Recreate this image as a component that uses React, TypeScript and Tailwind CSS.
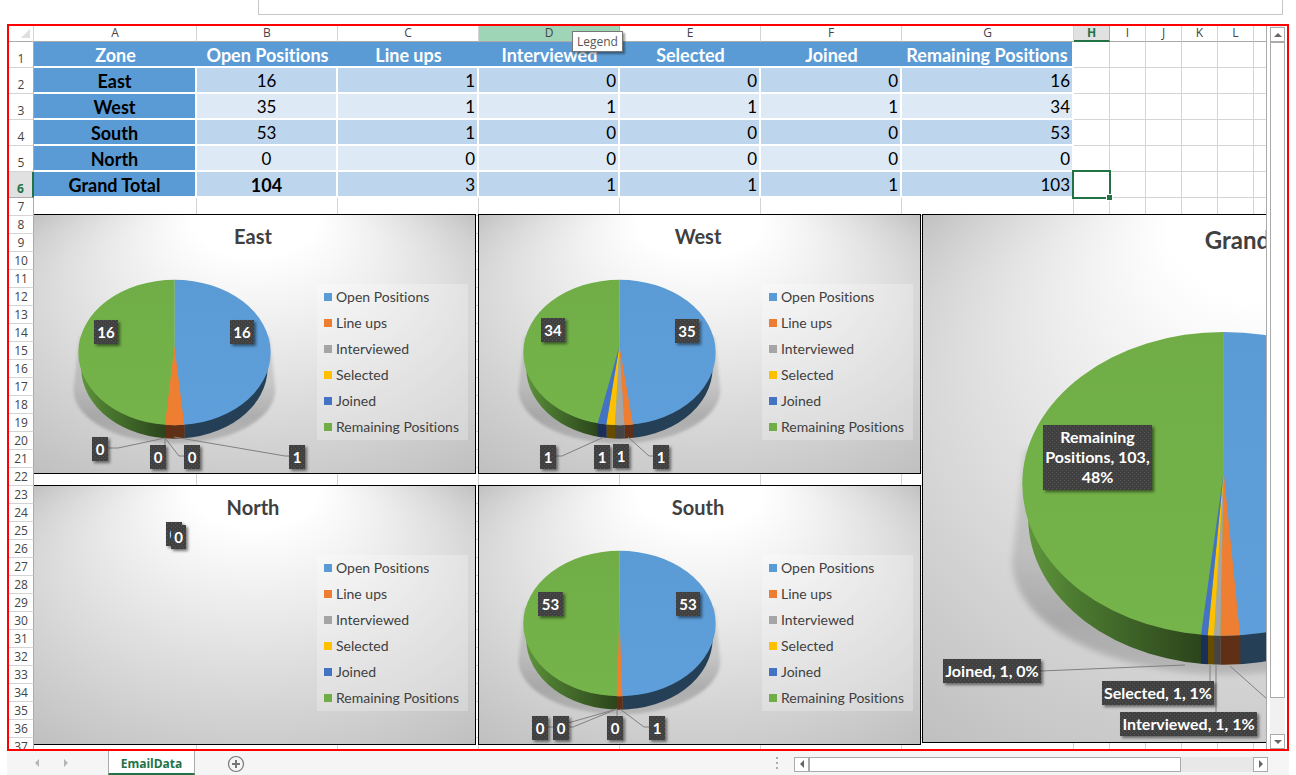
import React, { useId } from "react";

type Label = { x: number; y: number; w: number; h: number; lines: string[] };
type Wedge = { from: number; to: number; color: string; side: string };
type PieShape = { cx: number; cy: number; rx: number; ry: number; apex: number; lowCy: number; lowRx: number; lowRy: number };
type ChartData = {
  title: string;
  wedges: Wedge[];
  leaders: string[];
  labels: Label[];
  labelSize: string;
  pie?: PieShape;
};

const BLUE = "#5b9bd5";
const ORANGE = "#ee7e32";
const GRAY = "#a5a5a5";
const YELLOW = "#ffc000";
const NAVY = "#4472c4";
const GREEN = "#70ad47";

const legend = [
  { name: "Open Positions", swatch: "bg-[#5b9bd5]" },
  { name: "Line ups", swatch: "bg-[#ed7d31]" },
  { name: "Interviewed", swatch: "bg-[#a5a5a5]" },
  { name: "Selected", swatch: "bg-[#ffc000]" },
  { name: "Joined", swatch: "bg-[#4472c4]" },
  { name: "Remaining Positions", swatch: "bg-[#70ad47]" },
];

const columns = [
  { id: "A", width: "w-[163px]" },
  { id: "B", width: "w-[141px]" },
  { id: "C", width: "w-[141px]" },
  { id: "D", width: "w-[141px]" },
  { id: "E", width: "w-[141px]" },
  { id: "F", width: "w-[141px]" },
  { id: "G", width: "w-[172px]" },
  { id: "H", width: "w-[36px]" },
  { id: "I", width: "w-[36px]" },
  { id: "J", width: "w-[36px]" },
  { id: "K", width: "w-[36px]" },
  { id: "L", width: "w-[36px]" },
  { id: "", width: "w-[36px]" },
];
const spareColumns = ["H", "I", "J", "K", "L", ""];

const headings = ["Zone", "Open Positions", "Line ups", "Interviewed", "Selected", "Joined", "Remaining Positions"];
const rows = [
  ["East", "16", "1", "0", "0", "0", "16"],
  ["West", "35", "1", "1", "1", "1", "34"],
  ["South", "53", "1", "0", "0", "0", "53"],
  ["North", "0", "0", "0", "0", "0", "0"],
  ["Grand Total", "104", "3", "1", "1", "1", "103"],
];

const smallPie: PieShape = { cx: 141.4, cy: 138.5, rx: 96.3, ry: 72.7, apex: 132, lowCy: 154, lowRx: 93.2, lowRy: 70.7 };
const largePie: PieShape = { cx: 301.7, cy: 269.8, rx: 201.7, ry: 151.9, apex: 258, lowCy: 303.7, lowRx: 195.5, lowRy: 147 };

const box = (x: number, y: number, w: number, text: string): Label => ({ x, y, w, h: 24, lines: [text] });

const east: ChartData = {
  title: "East",
  pie: smallPie,
  labelSize: "text-[15px]",
  wedges: [{ from: 132, to: 151.3, color: ORANGE, side: "#5f3015" }],
  leaders: ["132,224 85,234 75,234", "132,224 132,231", "132,224 146,242 151,242", "141,223 252,242 256,242"],
  labels: [box(61, 106, 24, "16"), box(197, 106, 24, "16"), box(59, 223, 16, "0"), box(117, 231, 16, "0"), box(151, 231, 16, "0"), box(256, 231, 16, "1")],
};

const west: ChartData = {
  title: "West",
  pie: smallPie,
  labelSize: "text-[15px]",
  wedges: [
    { from: 146.3, to: 155, color: ORANGE, side: "#5f3015" },
    { from: 137, to: 146.3, color: GRAY, side: "#444444" },
    { from: 128.3, to: 137, color: YELLOW, side: "#664c00" },
    { from: 119.7, to: 128.3, color: NAVY, side: "#1b2e58" },
  ],
  leaders: ["126,223 84,242 78,242", "150,223 171,242 175,242"],
  labels: [box(63, 104, 24, "34"), box(197, 105, 24, "35"), box(62, 231, 16, "1"), box(116, 231, 16, "1"), box(135, 230, 16, "1"), box(175, 231, 16, "1")],
};

const south: ChartData = {
  title: "South",
  pie: smallPie,
  labelSize: "text-[15px]",
  wedges: [{ from: 138.7, to: 144.4, color: ORANGE, side: "#5f3015" }],
  leaders: ["139,224 90,238", "139,224 95,242 70,242", "139,224 139,231", "142,224 166,242 171,242"],
  labels: [box(60, 107, 25, "53"), box(198, 107, 24, "53"), box(54, 231, 16, "0"), box(75, 231, 16, "0"), box(129, 231, 16, "0"), box(171, 231, 16, "1")],
};

const north: ChartData = {
  title: "North",
  labelSize: "text-[15px]",
  wedges: [],
  leaders: [],
  labels: [box(133, 37, 16, "0"), box(138, 40, 15, "0")],
};

const grand: ChartData = {
  title: "Grand Total",
  pie: largePie,
  labelSize: "text-[16px]",
  wedges: [
    { from: 298.3, to: 318, color: ORANGE, side: "#5f3015" },
    { from: 292, to: 298.3, color: GRAY, side: "#444444" },
    { from: 285.7, to: 292, color: YELLOW, side: "#664c00" },
    { from: 279, to: 285.7, color: NAVY, side: "#1b2e58" },
  ],
  leaders: ["119,457 263,451", "288,451 288,467", "294,451 294,498", "308,452 345,485"],
  labels: [
    { x: 121, y: 211, w: 109, h: 65, lines: ["Remaining", "Positions, 103,", "48%"] },
    box(21, 445, 98, "Joined, 1, 0%"),
    box(180, 467, 112, "Selected, 1, 1%"),
    box(198, 498, 137, "Interviewed, 1, 1%"),
  ],
};

function edgeY(p: PieShape, x: number) {
  const d = (x - p.cx) / p.rx;
  return p.cy + p.ry * Math.sqrt(1 - d * d);
}

function Pie({ shape: p, wedges, id }: { shape: PieShape; wedges: Wedge[]; id: string }) {
  const s = p.rx / 96.3;
  const right = Math.max(...wedges.map((w) => w.to));
  const left = Math.min(...wedges.map((w) => w.from));
  const top = p.cy - p.ry;
  const bottom = p.lowCy + p.lowRy + 2;
  const sideTop = p.cy + 6 * s;
  const shY = p.cy + 37 * s;
  const shX = 101 * s;
  return (
    <g>
      <defs>
        <linearGradient id={`${id}-side`} x1="0" x2="1" y1="0" y2="0">
          <stop offset="0" stopColor="#62993e" />
          <stop offset="0.3" stopColor="#4c7a30" />
          <stop offset="1" stopColor="#2b441b" />
        </linearGradient>
        <linearGradient id={`${id}-shade`} x1="0" x2="0" y1="0" y2="1">
          <stop offset="0" stopColor="#000" stopOpacity="0.12" />
          <stop offset="0.45" stopColor="#000" stopOpacity="0.12" />
          <stop offset="0.75" stopColor="#000" stopOpacity="0.2" />
          <stop offset="1" stopColor="#000" stopOpacity="0.14" />
        </linearGradient>
        <linearGradient id={`${id}-green`} x1="0" x2="0" y1="0" y2="1">
          <stop offset="0" stopColor={GREEN} />
          <stop offset="1" stopColor="#75b44a" />
        </linearGradient>
        <linearGradient id={`${id}-blue`} x1="0" x2="0" y1="0" y2="1">
          <stop offset="0" stopColor={BLUE} />
          <stop offset="1" stopColor="#5e9fdb" />
        </linearGradient>
        <filter id={`${id}-blur`} x="-10%" y="-10%" width="120%" height="120%">
          <feGaussianBlur stdDeviation={1.4 * s} />
        </filter>
        <clipPath id={`${id}-low`}>
          <path d={`M${p.cx - p.lowRx},${sideTop} V${p.lowCy} A${p.lowRx},${p.lowRy} 0 0 0 ${p.cx + p.lowRx},${p.lowCy} V${sideTop} Z`} />
        </clipPath>
      </defs>
      <path
        d={`M${p.cx - 95 * s},${p.cy - 16 * s} L${p.cx - shX},${shY} A${shX},${54 * s} 0 0 0 ${p.cx + shX},${shY} L${p.cx + 95 * s},${p.cy - 16 * s} Z`}
        fill={`url(#${id}-shade)`}
        filter={`url(#${id}-blur)`}
      />
      <g clipPath={`url(#${id}-low)`}>
        <rect x={p.cx - p.rx} y={sideTop} width={left - p.cx + p.rx + 1} height={bottom - sideTop} fill={`url(#${id}-side)`} />
        <rect x={right} y={sideTop} width={p.cx + p.rx - right} height={bottom - sideTop} fill="#243f56" />
        {wedges.map((w) => (
          <rect key={w.from} x={w.from} y={p.cy} width={w.to - w.from + 0.3} height={bottom - p.cy} fill={w.side} />
        ))}
      </g>
      <path d={`M${p.cx},${top} A${p.rx},${p.ry} 0 0 1 ${p.cx},${p.cy + p.ry} Z`} fill={`url(#${id}-blue)`} />
      <path d={`M${p.cx + 0.2},${top} A${p.rx},${p.ry} 0 0 0 ${p.cx + 0.2},${p.cy + p.ry} Z`} fill={`url(#${id}-green)`} />
      {wedges.map((w) => (
        <path
          key={w.from}
          d={`M${p.cx},${p.apex} L${w.from},${edgeY(p, w.from)} A${p.rx},${p.ry} 0 0 0 ${w.to},${edgeY(p, w.to)} Z`}
          fill={w.color}
        />
      ))}
    </g>
  );
}

function ChartDrawing({ data, width, height }: { data: ChartData; width: number; height: number }) {
  const id = useId().replace(/[^a-zA-Z0-9]/g, "");
  return (
    <svg className="absolute inset-0 size-full" viewBox={`0 0 ${width} ${height}`} preserveAspectRatio="none" role="img" aria-label={`${data.title} pie chart`}>
      <defs>
        <radialGradient id={`${id}-bg`} cx="0.5" cy="0.5" r="0.707" fx="0.5" fy="-0.1">
          <stop offset="0.2" stopColor="#ffffff" />
          <stop offset="1" stopColor="#bfbfbf" />
        </radialGradient>
        <pattern id={`${id}-dots`} width="4" height="4" patternUnits="userSpaceOnUse">
          <rect width="4" height="4" fill="#3f3f3f" />
          <rect width="1" height="1" fill="#565656" />
          <rect x="2" y="2" width="1" height="1" fill="#565656" />
        </pattern>
        <filter id={`${id}-drop`} x="-30%" y="-30%" width="180%" height="180%">
          <feDropShadow dx="2" dy="2" stdDeviation="1.5" floodColor="#000" floodOpacity="0.5" />
        </filter>
      </defs>
      <rect width={width} height={height} fill={`url(#${id}-bg)`} />
      {data.pie && <Pie shape={data.pie} wedges={data.wedges} id={id} />}
      {data.leaders.map((points, i) => (
        <polyline key={i} points={points} fill="none" stroke="#808080" strokeWidth="1" />
      ))}
      {data.labels.map((l, i) => (
        <g key={i}>
          <rect x={l.x} y={l.y} width={l.w} height={l.h} fill={`url(#${id}-dots)`} filter={`url(#${id}-drop)`} />
          {l.lines.map((line, n) => (
            <text key={n} x={l.x + l.w / 2} y={l.y + 18 + n * 20} textAnchor="middle" fill="#fff" className={`font-bold ${data.labelSize}`}>
              {line}
            </text>
          ))}
        </g>
      ))}
    </svg>
  );
}

function SmallChart({ data, place }: { data: ChartData; place: string }) {
  return (
    <section className={`absolute h-[260px] w-[443px] ${place}`}>
      <ChartDrawing data={data} width={443} height={260} />
      <div className="absolute inset-0 border border-black pt-[7px]">
        <h2 className="pr-[3px] text-center text-[20px] leading-7 font-bold text-[#404040]">{data.title}</h2>
        <ul className="absolute top-[69px] right-[7px] w-[151px] bg-white/25 pl-[7px] text-[14px] leading-[26px] text-[#404040]">
          {legend.map((item) => (
            <li key={item.name} className="flex items-center gap-1 whitespace-nowrap">
              <span className={`size-2 shrink-0 ${item.swatch}`} />
              {item.name}
            </li>
          ))}
        </ul>
      </div>
    </section>
  );
}

function GrandChart() {
  return (
    <section className="absolute top-[172px] left-[888px] h-[529px] w-[688px]">
      <ChartDrawing data={grand} width={688} height={529} />
      <div className="absolute inset-0 border border-black pt-[7px]">
        <h2 className="text-center text-[24px] leading-9 font-bold text-[#404040]">{grand.title}</h2>
      </div>
    </section>
  );
}

function RowNumber({ n }: { n: number }) {
  const active = n === 6;
  return (
    <th
      scope="row"
      className={`border-b p-0 align-bottom font-['Open_Sans',sans-serif] text-[12px] leading-[17px] ${
        active
          ? "border-r-2 border-b-[#ababab] border-r-[#217346] bg-[#e1e1e1] font-bold text-[#217346]"
          : "border-r border-b-[#d4d4d4] border-r-[#ababab] font-normal text-[#444]"
      }`}
    >
      {n}
    </th>
  );
}

function Sheet() {
  return (
    <table className="w-[1281px] table-fixed border-separate border-spacing-0 leading-[22px] text-black">
      <colgroup>
        <col className="w-[25px]" />
        {columns.map((c) => (
          <col key={c.id} className={c.width} />
        ))}
      </colgroup>
      <thead>
        <tr className="h-4 font-['Open_Sans',sans-serif] text-[12px] leading-[14px] text-[#444]">
          <td className="border-r border-b border-r-[#d4d4d4] border-b-[#ababab] p-0">
            <svg className="ml-auto mr-[3px] size-[9px]" viewBox="0 0 9 9" aria-hidden="true">
              <path d="M9 0V9H0Z" fill="#dedede" />
            </svg>
          </td>
          {columns.map((c) => (
            <th
              key={c.id}
              scope="col"
              className={`p-0 align-top ${
                c.id === "H"
                  ? "border-r border-b-2 border-r-[#ababab] border-b-[#217346] bg-[#e1e1e1] font-bold text-[#217346]"
                  : c.id === "D"
                    ? "border-r border-b border-[#ababab] bg-[#9fd5b7] font-normal"
                    : "border-r border-b border-r-[#d4d4d4] border-b-[#ababab] font-normal"
              }`}
            >
              {c.id}
            </th>
          ))}
        </tr>
      </thead>
      <tbody>
        <tr className="h-[26px]">
          <RowNumber n={1} />
          {headings.map((h, i) => (
            <th
              key={h}
              scope="col"
              className={`border-b-2 border-white bg-[#5b9bd5] bg-clip-padding p-0 pt-[2px] text-[18px] font-bold whitespace-nowrap text-white ${i === 6 ? "border-r-2" : ""}`}
            >
              {h}
            </th>
          ))}
          {spareColumns.map((c) => (
            <td key={c} className="border-r border-b border-[#d4d4d4] p-0" />
          ))}
        </tr>
        {rows.map((row, r) => (
          <tr key={row[0]} className="h-[26px]">
            <RowNumber n={r + 2} />
            {row.map((value, i) => (
              <td
                key={i}
                className={`border-r-2 border-b-2 border-white p-0 pt-[2px] ${i === 0 ? "bg-[#5b9bd5]" : r % 2 ? "bg-[#ddeaf6]" : "bg-[#bdd5ed]"} ${
                  i < 2 ? "text-center" : "pr-[2px] text-right"
                } ${i === 0 || (i === 1 && r === 4) ? "text-[18px] font-bold" : "text-[17px]"}`}
              >
                {value}
              </td>
            ))}
            {spareColumns.map((c) => (
              <td key={c} className="relative border-r border-b border-[#d4d4d4] p-0">
                {c === "H" && r === 4 && (
                  <span className="absolute -inset-[2px] z-10 border-2 border-[#217346]">
                    <span className="absolute -right-[4px] -bottom-[4px] size-[7px] border border-white bg-[#217346]" />
                  </span>
                )}
              </td>
            ))}
          </tr>
        ))}
        {Array.from({ length: 31 }, (_, i) => (
          <tr key={i} className="h-[18px]">
            <RowNumber n={i + 7} />
            {columns.map((c) => (
              <td key={c.id} className="border-r border-b border-[#d4d4d4] p-0" />
            ))}
          </tr>
        ))}
      </tbody>
    </table>
  );
}

function Arrow({ path }: { path: string }) {
  return (
    <svg className="size-2" viewBox="0 0 8 8" aria-hidden="true">
      <path d={path} fill="currentColor" />
    </svg>
  );
}
const UP = "M0 6L4 2L8 6Z";
const DOWN = "M0 2L4 6L8 2Z";
const LEFT = "M6 0L2 4L6 8Z";
const RIGHT = "M2 0L6 4L2 8Z";

const scrollButton = "flex size-[15px] shrink-0 items-center justify-center border border-[#ababab] bg-white text-[#666]";

export default function App() {
  return (
    <div className="flex h-screen flex-col overflow-hidden bg-white px-[7px] font-[Lato,'Noto_Sans',sans-serif] [font-variant-ligatures:none]">
      <div className="mr-[6px] mb-[9px] ml-[251px] h-[15px] shrink-0 border-x border-b border-[#c6c6c6]" />
      <main className="flex min-h-0 flex-1 border-2 border-[#ff0000]">
        <div className="relative min-w-0 flex-1 overflow-hidden border-r border-[#ababab]">
          <Sheet />
          <div className="absolute top-4 right-0 bottom-0 left-[25px] overflow-hidden">
            <SmallChart data={east} place="top-[172px] left-[-1px]" />
            <SmallChart data={west} place="top-[172px] left-[444px]" />
            <SmallChart data={north} place="top-[443px] left-[-1px]" />
            <SmallChart data={south} place="top-[443px] left-[444px]" />
            <GrandChart />
          </div>
          <div
            role="tooltip"
            className="absolute top-[5px] left-[563px] z-20 border border-[#767676] bg-white px-[4px] font-['Open_Sans',sans-serif] text-[12px] leading-[19px] text-[#575757] shadow-[2px_2px_2px_rgba(0,0,0,0.4)]"
          >
            Legend
          </div>
        </div>
        <div className="mr-[2px] ml-[3px] flex w-[15px] shrink-0 flex-col bg-[#f1f1f1] pt-px">
          <button type="button" aria-label="Scroll up" className={scrollButton}>
            <Arrow path={UP} />
          </button>
          <div className="min-h-0 flex-1 border border-[#ababab] bg-white" />
          <div className="h-9 shrink-0" />
          <button type="button" aria-label="Scroll down" className={scrollButton}>
            <Arrow path={DOWN} />
          </button>
        </div>
      </main>
      <footer className="flex h-6 shrink-0 items-center bg-[#f5f5f5] pr-[21px] pl-[26px]">
        <button type="button" aria-label="Previous sheet" className="mr-[21px] text-[#b5b5b5]">
          <Arrow path={LEFT} />
        </button>
        <button type="button" aria-label="Next sheet" className="text-[#b5b5b5]">
          <Arrow path={RIGHT} />
        </button>
        <button
          type="button"
          className="ml-[38px] h-full w-[87px] border-x border-b-2 border-x-[#ababab] border-b-[#217346] bg-white pt-[3px] font-['Open_Sans',sans-serif] text-[12px] leading-[18px] font-bold text-[#217346]"
        >
          EmailData
        </button>
        <button type="button" aria-label="New sheet" className="ml-8 pt-px text-[#767676]">
          <svg className="size-[18px]" viewBox="0 0 18 18" fill="none" stroke="currentColor" aria-hidden="true">
            <circle cx="9" cy="9" r="7.5" strokeWidth="1.2" />
            <path d="M9 5V13M5 9H13" strokeWidth="2" />
          </svg>
        </button>
        <div className="flex-1" />
        <div className="mr-4 flex flex-col gap-[3px]">
          <span className="size-[2px] bg-[#ababab]" />
          <span className="size-[2px] bg-[#ababab]" />
          <span className="size-[2px] bg-[#ababab]" />
        </div>
        <div className="mt-[2px] flex w-[474px] bg-[#e8e8e8]">
          <button type="button" aria-label="Scroll left" className={scrollButton}>
            <Arrow path={LEFT} />
          </button>
          <div className="h-[15px] flex-1 border border-[#ababab] bg-white" />
          <div className="w-[72px] shrink-0" />
          <button type="button" aria-label="Scroll right" className={scrollButton}>
            <Arrow path={RIGHT} />
          </button>
        </div>
      </footer>
    </div>
  );
}
